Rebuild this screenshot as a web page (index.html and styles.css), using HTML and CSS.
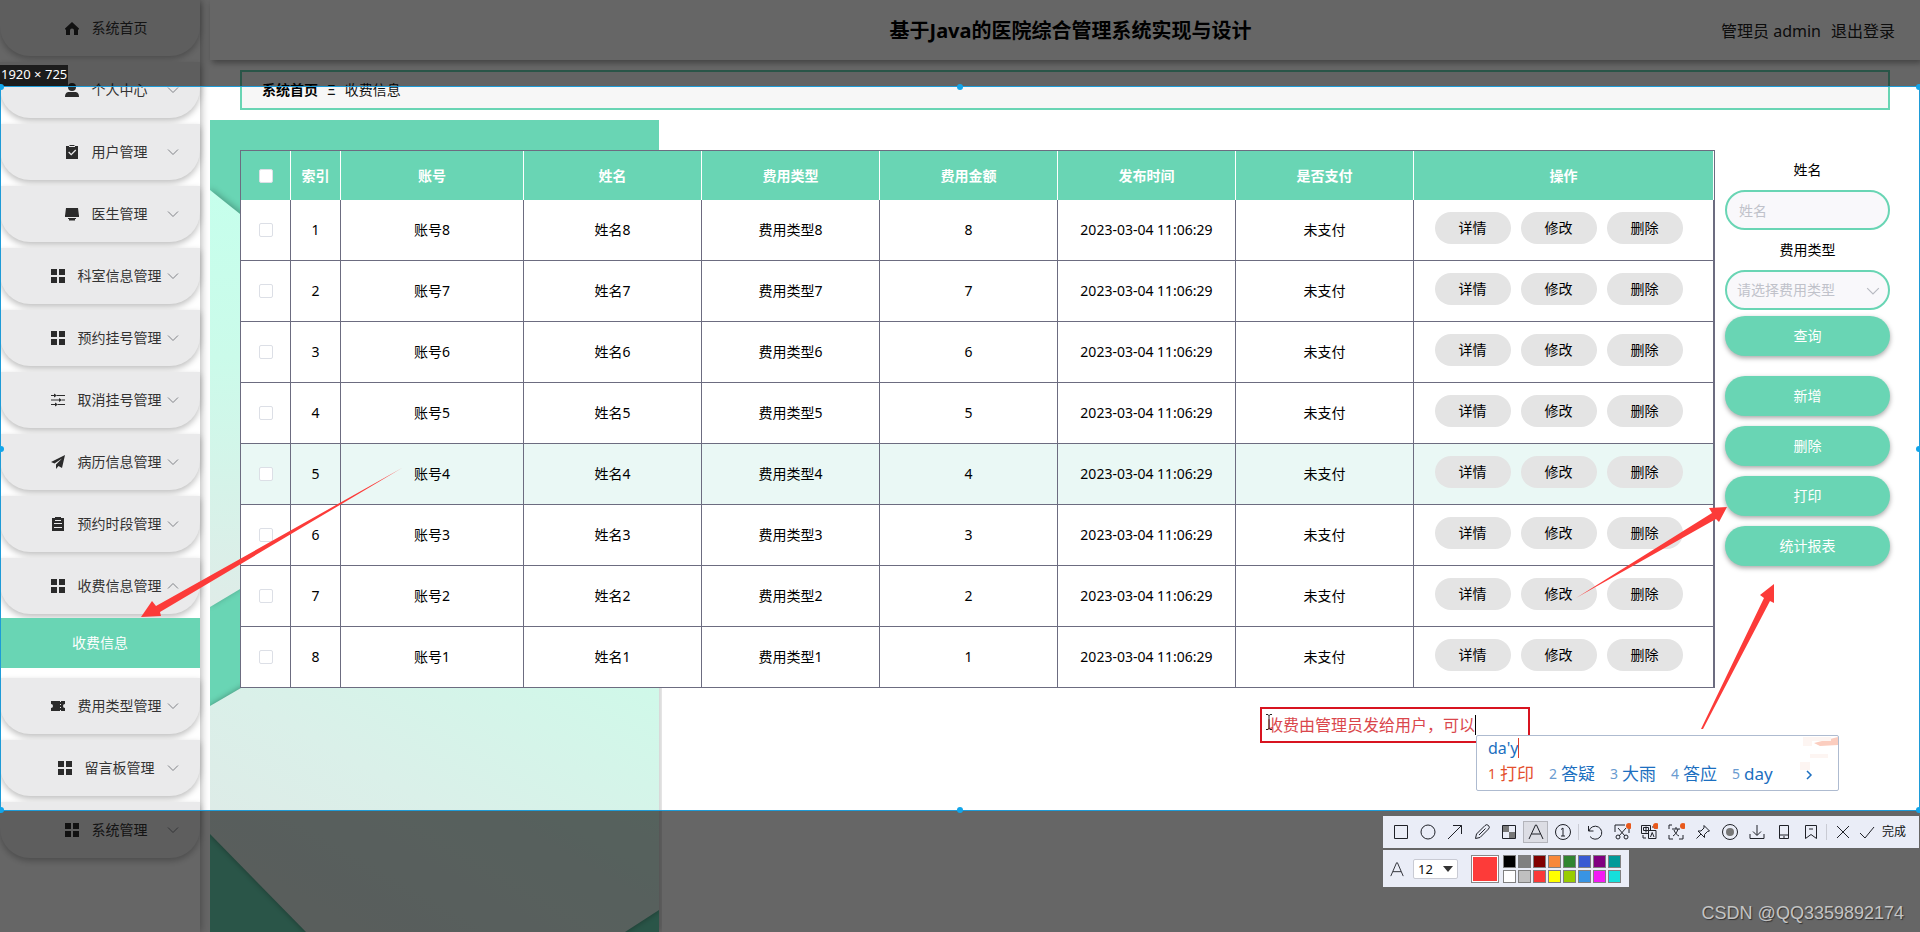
FILE: index.html
```html
<!DOCTYPE html>
<html lang="zh-CN">
<head>
<meta charset="utf-8">
<title>基于Java的医院综合管理系统实现与设计</title>
<link rel="stylesheet" href="styles.css">
</head>
<body>
<svg class="defs" aria-hidden="true">
  <symbol id="i-grid" viewBox="0 0 14 14"><path d="M0 0h6v6H0zM8 0h6v6H8zM0 8h6v6H0zM8 8h6v6H8z"/></symbol>
  <symbol id="i-home" viewBox="0 0 14 14"><path d="M7 1 0 7.500V8.500H1V14H5V9.500a2 2 0 0 1 4 0V14h4V8.500h1V7.500z"/></symbol>
  <symbol id="i-user" viewBox="0 0 14 14"><circle cx="7" cy="4" r="4"/><path d="M0 14c0-4 2-5 4-5h6c2 0 4 1 4 5z"/></symbol>
  <symbol id="i-check" viewBox="0 0 14 14"><path fill-rule="evenodd" d="M1 1h3v1h6V1h3v13H1zM3.200 7.500 6.200 10.500 11.200 5.500 10.300 4.600 6.200 8.700 4.100 6.600zM4.500 0h5v1h-5z"/></symbol>
  <symbol id="i-desk" viewBox="0 0 14 14"><path d="M1 1h12l1 8H0zM0 8h14v2H0zM3 11h8v1h-1v1.500H4V12H3z"/></symbol>
  <symbol id="i-sliders" viewBox="0 0 14 14"><path d="M0 2h3V.500L6 2.500 3 4.500V3H0zM6 2h8v1H6zM0 6.500h8V5l3 2-3 2V7.500H0zM11 6.500h3v1h-3zM0 11h4V9.500l3 2-3 2V12H0zM7 11h7v1H7z"/></symbol>
  <symbol id="i-plane" viewBox="0 0 14 14"><path d="M14 0 0 7l3.500 1.500L11 3.500 5 9.500V14l2.500-3 3.500 2z"/></symbol>
  <symbol id="i-list" viewBox="0 0 14 14"><path fill-rule="evenodd" d="M1 1h3V0h6v1h3v13H1zM4 3v1h6V3zM3 6v1h8V6zM3 10v1h8v-1z"/></symbol>
  <symbol id="i-ticket" viewBox="0 0 14 14"><path fill-rule="evenodd" d="M0 2h9v1h1V2h4v3a2 2 0 0 0 0 4v3h-4v-1H9v1H0V9a2 2 0 0 0 0-4zM9 5v1h1V5zM9 8v1h1V8z"/></symbol>
  <symbol id="i-down" viewBox="0 0 12 12"><path d="M1 3.500 6 8.500 11 3.500" fill="none" stroke="currentColor"/></symbol>
  <symbol id="i-up" viewBox="0 0 12 12"><path d="M1 8.500 6 3.500 11 8.500" fill="none" stroke="currentColor"/></symbol>
</svg>

<div class="app">
  <nav class="sidebar">
    <a class="item" href="#"><span class="name"><svg><use href="#i-home"/></svg>系统首页</span></a>
    <a class="item" href="#"><span class="name"><svg><use href="#i-user"/></svg>个人中心</span><svg class="chev"><use href="#i-down"/></svg></a>
    <a class="item" href="#"><span class="name"><svg><use href="#i-check"/></svg>用户管理</span><svg class="chev"><use href="#i-down"/></svg></a>
    <a class="item" href="#"><span class="name"><svg><use href="#i-desk"/></svg>医生管理</span><svg class="chev"><use href="#i-down"/></svg></a>
    <a class="item" href="#"><span class="name"><svg><use href="#i-grid"/></svg>科室信息管理</span><svg class="chev"><use href="#i-down"/></svg></a>
    <a class="item" href="#"><span class="name"><svg><use href="#i-grid"/></svg>预约挂号管理</span><svg class="chev"><use href="#i-down"/></svg></a>
    <a class="item" href="#"><span class="name"><svg><use href="#i-sliders"/></svg>取消挂号管理</span><svg class="chev"><use href="#i-down"/></svg></a>
    <a class="item" href="#"><span class="name"><svg><use href="#i-plane"/></svg>病历信息管理</span><svg class="chev"><use href="#i-down"/></svg></a>
    <a class="item" href="#"><span class="name"><svg><use href="#i-list"/></svg>预约时段管理</span><svg class="chev"><use href="#i-down"/></svg></a>
    <a class="item" href="#"><span class="name"><svg><use href="#i-grid"/></svg>收费信息管理</span><svg class="chev"><use href="#i-up"/></svg></a>
    <a class="subitem" href="#">收费信息</a>
    <a class="item" href="#"><span class="name"><svg><use href="#i-ticket"/></svg>费用类型管理</span><svg class="chev"><use href="#i-down"/></svg></a>
    <a class="item" href="#"><span class="name"><svg><use href="#i-grid"/></svg>留言板管理</span><svg class="chev"><use href="#i-down"/></svg></a>
    <a class="item" href="#"><span class="name"><svg><use href="#i-grid"/></svg>系统管理</span><svg class="chev"><use href="#i-down"/></svg></a>
  </nav>

  <main class="main">
    <header class="header">
      <h1>基于Java的医院综合管理系统实现与设计</h1>
      <div class="account"><span>管理员 admin</span><a href="#">退出登录</a></div>
    </header>
    <div class="breadcrumb"><a href="#">系统首页</a><span>Ξ</span><span>收费信息</span></div>

    <section class="content">
      <svg class="backdrop" viewBox="0 0 460 812" aria-hidden="true">
        <defs>
          <linearGradient id="g1" x1="0" y1="0" x2="0" y2="1"><stop offset="0" stop-color="#c6ffec"/><stop offset=".4" stop-color="#cbfbea"/><stop offset="1" stop-color="#dfece8"/></linearGradient>
          <linearGradient id="g2" x1="0" y1="1" x2="1" y2="0"><stop offset="0" stop-color="#e0e8e6"/><stop offset=".5" stop-color="#daf0e9"/><stop offset="1" stop-color="#cff9e9"/></linearGradient>
          <filter id="soft"><feGaussianBlur stdDeviation="3"/></filter>
          <clipPath id="clip"><path d="M0 0h449v812H0z"/></clipPath>
        </defs>
        <path d="M445 560h6v252h-6z" fill="#000" opacity=".25" filter="url(#soft)"/>
        <g clip-path="url(#clip)">
          <path d="M0 0h449v812H0z" fill="#69d5b4"/>
          <path d="M0 68 60 114V450L0 486z" fill="#000" opacity=".25" filter="url(#soft)"/>
          <path d="M0 70 60 118V451L0 487z" fill="url(#g1)"/>
          <path d="M0 586 50 557H449V790L415 812H96L0 714z" fill="#000" opacity=".35" filter="url(#soft)"/>
          <path d="M0 586 50 557H449V790L415 812H96L0 714z" fill="url(#g2)"/>
        </g>
      </svg>

      <table class="table">
        <colgroup><col class="c-s"><col class="c-s"><col class="c-m"><col><col><col><col><col><col class="c-l"></colgroup>
        <thead><tr><th><input type="checkbox" aria-label="全选"></th><th>索引</th><th>账号</th><th>姓名</th><th>费用类型</th><th>费用金额</th><th>发布时间</th><th>是否支付</th><th>操作</th></tr></thead>
        <tbody>
        <tr><td><input type="checkbox" aria-label="1"></td><td>1</td><td>账号8</td><td>姓名8</td><td>费用类型8</td><td>8</td><td>2023-03-04 11:06:29</td><td>未支付</td><td><div class="ops"><button>详情</button><button>修改</button><button>删除</button></div></td></tr>
        <tr><td><input type="checkbox" aria-label="2"></td><td>2</td><td>账号7</td><td>姓名7</td><td>费用类型7</td><td>7</td><td>2023-03-04 11:06:29</td><td>未支付</td><td><div class="ops"><button>详情</button><button>修改</button><button>删除</button></div></td></tr>
        <tr><td><input type="checkbox" aria-label="3"></td><td>3</td><td>账号6</td><td>姓名6</td><td>费用类型6</td><td>6</td><td>2023-03-04 11:06:29</td><td>未支付</td><td><div class="ops"><button>详情</button><button>修改</button><button>删除</button></div></td></tr>
        <tr><td><input type="checkbox" aria-label="4"></td><td>4</td><td>账号5</td><td>姓名5</td><td>费用类型5</td><td>5</td><td>2023-03-04 11:06:29</td><td>未支付</td><td><div class="ops"><button>详情</button><button>修改</button><button>删除</button></div></td></tr>
        <tr class="hover"><td><input type="checkbox" aria-label="5"></td><td>5</td><td>账号4</td><td>姓名4</td><td>费用类型4</td><td>4</td><td>2023-03-04 11:06:29</td><td>未支付</td><td><div class="ops"><button>详情</button><button>修改</button><button>删除</button></div></td></tr>
        <tr><td><input type="checkbox" aria-label="6"></td><td>6</td><td>账号3</td><td>姓名3</td><td>费用类型3</td><td>3</td><td>2023-03-04 11:06:29</td><td>未支付</td><td><div class="ops"><button>详情</button><button>修改</button><button>删除</button></div></td></tr>
        <tr><td><input type="checkbox" aria-label="7"></td><td>7</td><td>账号2</td><td>姓名2</td><td>费用类型2</td><td>2</td><td>2023-03-04 11:06:29</td><td>未支付</td><td><div class="ops"><button>详情</button><button>修改</button><button>删除</button></div></td></tr>
        <tr><td><input type="checkbox" aria-label="8"></td><td>8</td><td>账号1</td><td>姓名1</td><td>费用类型1</td><td>1</td><td>2023-03-04 11:06:29</td><td>未支付</td><td><div class="ops"><button>详情</button><button>修改</button><button>删除</button></div></td></tr>
        </tbody>
      </table>

      <form class="filters">
        <label for="q-name">姓名</label>
        <input id="q-name" type="text" placeholder="姓名">
        <label for="q-type">费用类型</label>
        <div class="select"><select id="q-type"><option>请选择费用类型</option></select><svg><use href="#i-down"/></svg></div>
        <button type="button" class="search">查询</button>
        <div class="actions">
          <button type="button">新增</button>
          <button type="button">删除</button>
          <button type="button">打印</button>
          <button type="button">统计报表</button>
        </div>
      </form>
    </section>
  </main>
</div>

<div class="capture">
  <div class="shade top"><span class="size">1920 × 725</span></div>
  <div class="region"><i class="h tl"></i><i class="h tc"></i><i class="h tr"></i><i class="h ml"></i><i class="h mr"></i><i class="h bl"></i><i class="h bc"></i><i class="h br"></i></div>
  <div class="shade rest"></div>

  <svg class="arrows" viewBox="0 0 1920 932" fill="#fc3b39" aria-hidden="true">
    <path d="M402 468 156 606 152 601 141 617 161 616 160 612z"/>
    <path d="M1576 598 1712 513 1709 508 1727 507 1719 522 1716 519z"/>
    <path d="M1701 729 1764 598 1760 595 1774 584 1774 603 1770 601 1703 729z"/>
  </svg>

  <div class="note">收费由管理员发给用户，可以<i class="caret"></i></div>
  <svg class="ibeam" viewBox="0 0 8 16" fill="none" stroke="#222"><path d="M1 .500h2l1 1 1-1h2M4 1v14M1 15.500h2l1-1 1 1h2"/></svg>

  <div class="ime">
    <div class="typed">da'y<i class="caret"></i></div>
    <ol>
      <li class="on"><small>1</small>打印</li><li><small>2</small>答疑</li><li><small>3</small>大雨</li><li><small>4</small>答应</li><li><small>5</small>day</li>
    </ol>
    <svg class="next" viewBox="0 0 8 12"><path d="M2 2 6 6 2 10" fill="none" stroke="#1c6fc0" stroke-width="1.500"/></svg>
    <svg class="skin" viewBox="0 0 40 40"><path d="M16 7 40 1v8l-18 1z" fill="#fbcdbf"/><path d="M5 1h28v4H14v5H5zM12 18h18v4H12zM2 26h10v8H2z" fill="#fdf5f2"/></svg>
  </div>

  <div class="tools">
    <div class="bar">
      <button aria-label="矩形"><svg viewBox="0 0 18 18"><path d="M2.500 2.500h13v13h-13z"/></svg></button>
      <button aria-label="椭圆"><svg viewBox="0 0 18 18"><circle cx="9" cy="9" r="7"/></svg></button>
      <button aria-label="箭头"><svg viewBox="0 0 18 18"><path d="M2 16 15.500 2.500M7 2.500h8.500V11"/></svg></button>
      <button aria-label="画笔"><svg viewBox="0 0 18 18"><path d="M2.500 15.500l1-4.500 8.500-8.500a2 2 0 0 1 3.500 3.500L7 14.500zM6 12l6.500-6.500"/></svg></button>
      <button aria-label="马赛克"><svg viewBox="0 0 18 18"><path d="M3 3h6v6H3zM9 9h6v6H9z" fill="#777" stroke="none"/><path d="M2.500 2.500h13v13h-13z"/></svg></button>
      <button class="on" aria-label="文字"><svg viewBox="0 0 18 18"><path d="M2 16 8.500 2h1L16 16M4.500 11h9"/></svg></button>
      <button aria-label="序号"><svg viewBox="0 0 18 18"><circle cx="9" cy="9" r="7.500"/><path d="M7 6.500 9 5v8M7 13h4"/></svg></button>
      <hr>
      <button aria-label="撤销"><svg viewBox="0 0 18 18"><path d="M2.500 3v5h5M3 8a6.500 6.500 0 1 1 1 5.500"/></svg></button>
      <button aria-label="抠图"><svg viewBox="0 0 18 18"><path d="M2 9V2h10M16 6v4M5 5l7 8M13 5l-7 8"/><circle cx="5" cy="14" r="2"/><circle cx="13" cy="14" r="2"/><circle class="dot" cx="16" cy="3" r="3"/></svg></button>
      <button aria-label="翻译"><svg viewBox="0 0 18 18"><path d="M8 10.500H1.500v-8h9V7M3.500 4.500h5v3h-5zM6 3.500v6M8.500 7.500H16v8H8.500zM10.500 14l1.700-4.500 1.800 4.500M3 12v3h3M12 4h3v2"/><circle class="dot" cx="16" cy="3" r="3"/></svg></button>
      <button aria-label="识别文字"><svg viewBox="0 0 18 18"><path d="M2 6V2h3M2 12v4h4M16 12v4h-4M5 6h8M9 4v2M6 13c3-2 4-4 5-7M7 7c1 3 3 5 5 6"/><circle class="dot" cx="16" cy="3" r="3"/></svg></button>
      <button aria-label="钉住"><svg viewBox="0 0 18 18"><path d="M10 2.500 15.500 8l-2 .500-3 3v3L4 8h3l3-3zM7 11 2.500 15.500"/></svg></button>
      <button aria-label="录制"><svg viewBox="0 0 18 18"><circle cx="9" cy="9" r="7.500"/><circle cx="9" cy="9" r="4" fill="#777" stroke="none"/></svg></button>
      <button aria-label="下载"><svg viewBox="0 0 18 18"><path d="M9 2v10M5 8.500l4 4 4-4M2 11v4.500h14V11"/></svg></button>
      <button aria-label="手机"><svg viewBox="0 0 18 18"><path d="M4.500 2.500h9v13h-9zM4.500 12h9M8 14h2"/></svg></button>
      <button aria-label="收藏"><svg viewBox="0 0 18 18"><path d="M3.500 2.500h11v13L9 11.500l-5.500 4zM7 6h4"/></svg></button>
      <hr>
      <button aria-label="关闭"><svg viewBox="0 0 18 18"><path d="M3 3l12 12M15 3 3 15"/></svg></button>
      <button class="done"><svg viewBox="0 0 18 18"><path d="M2 10l5 5L16 4"/></svg>完成</button>
    </div>
    <div class="bar style">
      <svg class="letter" viewBox="0 0 18 18"><path d="M2 17 8.500 2h1L16 17M4.500 12h9"/></svg>
      <span class="size-pick"><select aria-label="字号"><option>12</option></select><svg viewBox="0 0 10 6"><path d="M0 0h10L5 6z"/></svg></span>
      <span class="current"></span>
      <div class="swatches">
        <button class="k1" aria-label="黑"></button><button class="k2" aria-label="灰"></button><button class="k3" aria-label="深红"></button><button class="k4" aria-label="橙"></button><button class="k5" aria-label="绿"></button><button class="k6" aria-label="蓝"></button><button class="k7" aria-label="紫"></button><button class="k8" aria-label="青"></button>
        <button class="k9" aria-label="白"></button><button class="k10" aria-label="浅灰"></button><button class="k11" aria-label="红"></button><button class="k12" aria-label="黄"></button><button class="k13" aria-label="黄绿"></button><button class="k14" aria-label="天蓝"></button><button class="k15" aria-label="品红"></button><button class="k16" aria-label="浅青"></button>
      </div>
    </div>
  </div>
  <div class="watermark">CSDN @QQ3359892174</div>
</div>
</body>
</html>
```
FILE: styles.css
```css
* { box-sizing: border-box; }
body { margin: 0; position: relative; font: 14px/20px "Noto Sans", "Noto Sans CJK SC", sans-serif; color: #111; background: #fff; }
a { color: inherit; text-decoration: none; }
button, input, select { font: inherit; color: inherit; margin: 0; }
button { cursor: pointer; border: 0; padding: 0; }
.defs { position: absolute; width: 0; height: 0; }

.app { display: grid; grid-template-columns: 200px minmax(0, 1fr); gap: 10px; min-height: 100vh; }

.sidebar { background: #fff; box-shadow: 1px 0 8px rgba(0, 0, 0, .3); overflow: clip; overflow-clip-margin: 10px; }
.item { display: grid; grid-template-columns: 112px 38px; align-items: center; height: 56px; margin-bottom: 6px; padding-left: 50px; color: #333; background: #eaeaeb; border-radius: 0 0 30px 30px; box-shadow: 0 3px 6px rgba(0, 0, 0, .25); }
.name { display: flex; align-items: center; justify-content: center; gap: 13px; white-space: nowrap; }
.name svg { width: 14px; height: 14px; fill: #2b2b2b; }
.chev { width: 12px; height: 12px; margin-left: 5px; color: #808287; }
.subitem { position: relative; display: flex; align-items: center; justify-content: center; height: 50px; margin: -2px 0 10px; color: #fff; background: #69d5b4; }

.main { display: flex; flex-direction: column; min-width: 0; }
.header { display: flex; align-items: center; height: 60px; padding: 2px 25px 0; background: #fff; box-shadow: 2px 3px 6px rgba(0, 0, 0, .35); }
.header h1 { flex: 1; margin: 0; padding-left: 185px; font-size: 20px; line-height: 28px; text-align: center; color: #000; }
.account { display: flex; gap: 10px; font-size: 16px; color: #222; }
.breadcrumb { display: flex; align-items: center; gap: 9px; height: 40px; margin: 10px 30px; padding: 0 20px; border: 2px solid #69d5b4; background: #f7f7f7; }
.breadcrumb a { font-weight: 700; color: #000; }

.content { position: relative; flex: 1; display: flex; align-items: flex-start; gap: 10px; padding: 30px; }
.backdrop { position: absolute; left: 0; top: 0; width: 460px; height: 812px; }
.table { position: relative; flex: 1; width: 100%; min-width: 0; table-layout: fixed; border-collapse: separate; border-spacing: 0; border: 1px solid #6c6c80; border-bottom: 0; background: #fff; text-align: center; }
.c-s { width: 50px; }
.c-m { width: 183px; }
.c-l { width: 300px; }
.table th { height: 49px; padding: 0; color: #fff; background: #69d5b4; border-right: 1px solid #fff; }
.table td { height: 61px; padding: 0; color: #000; border-right: 1px solid #6c6c80; border-bottom: 1px solid #6c6c80; }
.table .hover td { background: #eaf8f5; }
.table input { display: block; appearance: none; width: 14px; height: 14px; margin: 0 auto; border: 1px solid #dcdfe6; border-radius: 2px; background: #fff; }
.ops { display: flex; justify-content: center; gap: 10px; padding: 0 10px 4px 0; }
.ops button { width: 76px; height: 32px; border-radius: 16px; background: #e4e4e4; }

.filters { position: relative; flex: none; display: flex; flex-direction: column; width: 165px; }
.filters label { line-height: 40px; text-align: center; color: #000; }
.filters > input, .filters select { width: 100%; height: 40px; padding: 0 12px; border: 2px solid #69d5b4; border-radius: 20px; background: #f9f8fb; outline: 0; appearance: none; }
.filters > input::placeholder { color: #c0c2ca; }
.filters select { display: block; color: #c0c2ca; padding: 0 10px; }
.select { position: relative; }
.select svg { position: absolute; right: 10px; top: 14px; width: 14px; height: 14px; color: #b8bac2; }
.filters button { height: 40px; border-radius: 20px; color: #fff; background: #69d5b4; box-shadow: 0 2px 5px rgba(0, 0, 0, .35); }
.filters .search { margin: 6px 0 20px; }
.actions { display: flex; flex-direction: column; gap: 10px; }

.capture { position: absolute; inset: 0; display: flex; flex-direction: column; overflow: hidden; }
.shade { background: rgba(0, 0, 0, .6); }
.top { display: flex; align-items: flex-end; height: 86px; }
.size { padding: 0 1px; height: 21px; font-size: 13px; line-height: 18px; color: #fff; background: #1c1c1c; }
.region { position: relative; height: 725px; border: 1px solid #1e9bd7; }
.rest { flex: 1; }
.h { position: absolute; width: 6px; height: 6px; border-radius: 3px; background: #12a5ea; }
.tl, .ml, .bl { left: -3px; }
.tr, .mr, .br { right: -3px; }
.tl, .tc, .tr { top: -3px; }
.bl, .bc, .br { bottom: -3px; }
.tc, .bc { left: calc(50% - 3px); }
.ml, .mr { top: calc(50% - 3px); }
.arrows { position: absolute; left: 0; top: 0; width: 1920px; height: 932px; }

.note { position: absolute; left: 1260px; top: 707px; display: flex; align-items: center; width: 270px; height: 36px; padding-left: 5px; border: 2px solid #d81420; font-size: 16px; color: #da474c; white-space: nowrap; }
.caret { width: 1px; height: 20px; background: #000; }
.ibeam { position: absolute; left: 1265px; top: 714px; width: 8px; height: 16px; }
.ime { position: absolute; left: 1476px; top: 735px; width: 363px; height: 56px; padding: 0 11px; border: 1px solid #aebbd0; border-radius: 2px; background: #fff; color: #1c6fc0; }
.typed { display: flex; align-items: center; height: 24px; font-size: 16px; }
.typed .caret { background: #e03c28; }
.ime ol { display: flex; align-items: center; gap: 15px; height: 28px; margin: 0; padding: 0; list-style: none; font-size: 17px; }
.ime li { display: flex; align-items: center; gap: 4px; }
.ime small { font-size: 14px; color: #6a9bd0; }
.ime .on, .ime .on small { color: #e4502e; }
.next { position: absolute; right: 25px; top: 33px; width: 8px; height: 12px; }
.skin { position: absolute; right: 0; top: 0; width: 40px; height: 40px; }

.tools { position: absolute; right: 1px; top: 816px; display: flex; flex-direction: column; align-items: flex-start; gap: 2px; width: 536px; }
.bar { display: flex; align-items: center; width: 100%; height: 32px; padding-left: 6px; background: #eaedf7; }
.bar button { display: flex; align-items: center; justify-content: center; width: 23px; height: 20px; margin-right: 4px; background: none; }
.bar svg { width: 18px; height: 18px; fill: none; stroke: #1f2128; }
.bar .dot { fill: #e8591c; stroke: none; }
.bar button.on { background: #dcdde4; outline: 1px solid #b3b4bb; }
.bar hr { width: 1px; height: 16px; margin: 0 4px 0 0; border: 0; background: #c9cbd4; }
.bar button.done { width: auto; gap: 6px; margin: 0; font-size: 12px; color: #111; }
.bar.style { width: 246px; height: 37px; }
.style .letter { width: 16px; height: 18px; }
.size-pick { position: relative; margin: 0 13px 0 8px; }
.size-pick select { display: block; width: 45px; height: 20px; padding: 0 4px; border: 1px solid #c9cbd4; border-radius: 2px; background: #fff; font-size: 13px; line-height: 18px; appearance: none; }
.bar .size-pick svg { position: absolute; right: 5px; top: 7px; width: 10px; height: 6px; fill: #333; stroke: none; }
.current { width: 28px; height: 28px; margin-right: 4px; border: 1px solid #888; background: #fd3b39; outline: 1px solid #fff; outline-offset: -2px; }
.swatches { display: grid; grid-template-columns: repeat(8, 13px); gap: 2px; }
.swatches button { width: 13px; height: 13px; margin: 0; border: 1px solid #808080; }
.swatches .k1 { background: #000; }
.swatches .k2 { background: #808080; }
.swatches .k3 { background: #800000; }
.swatches .k4 { background: #f7883a; }
.swatches .k5 { background: #308430; }
.swatches .k6 { background: #385ad3; }
.swatches .k7 { background: #800080; }
.swatches .k8 { background: #099; }
.swatches .k9 { background: #fff; }
.swatches .k10 { background: #c0c0c0; }
.swatches .k11 { background: #fb3838; }
.swatches .k12 { background: #ff0; }
.swatches .k13 { background: #9c0; }
.swatches .k14 { background: #3894e4; }
.swatches .k15 { background: #f31bf3; }
.swatches .k16 { background: #16dfdb; }
.watermark { position: absolute; right: 16px; bottom: 7px; font: 18px/24px "Liberation Sans", sans-serif; color: #c4c4c4; text-shadow: 1px 1px 1px #333; }
```
